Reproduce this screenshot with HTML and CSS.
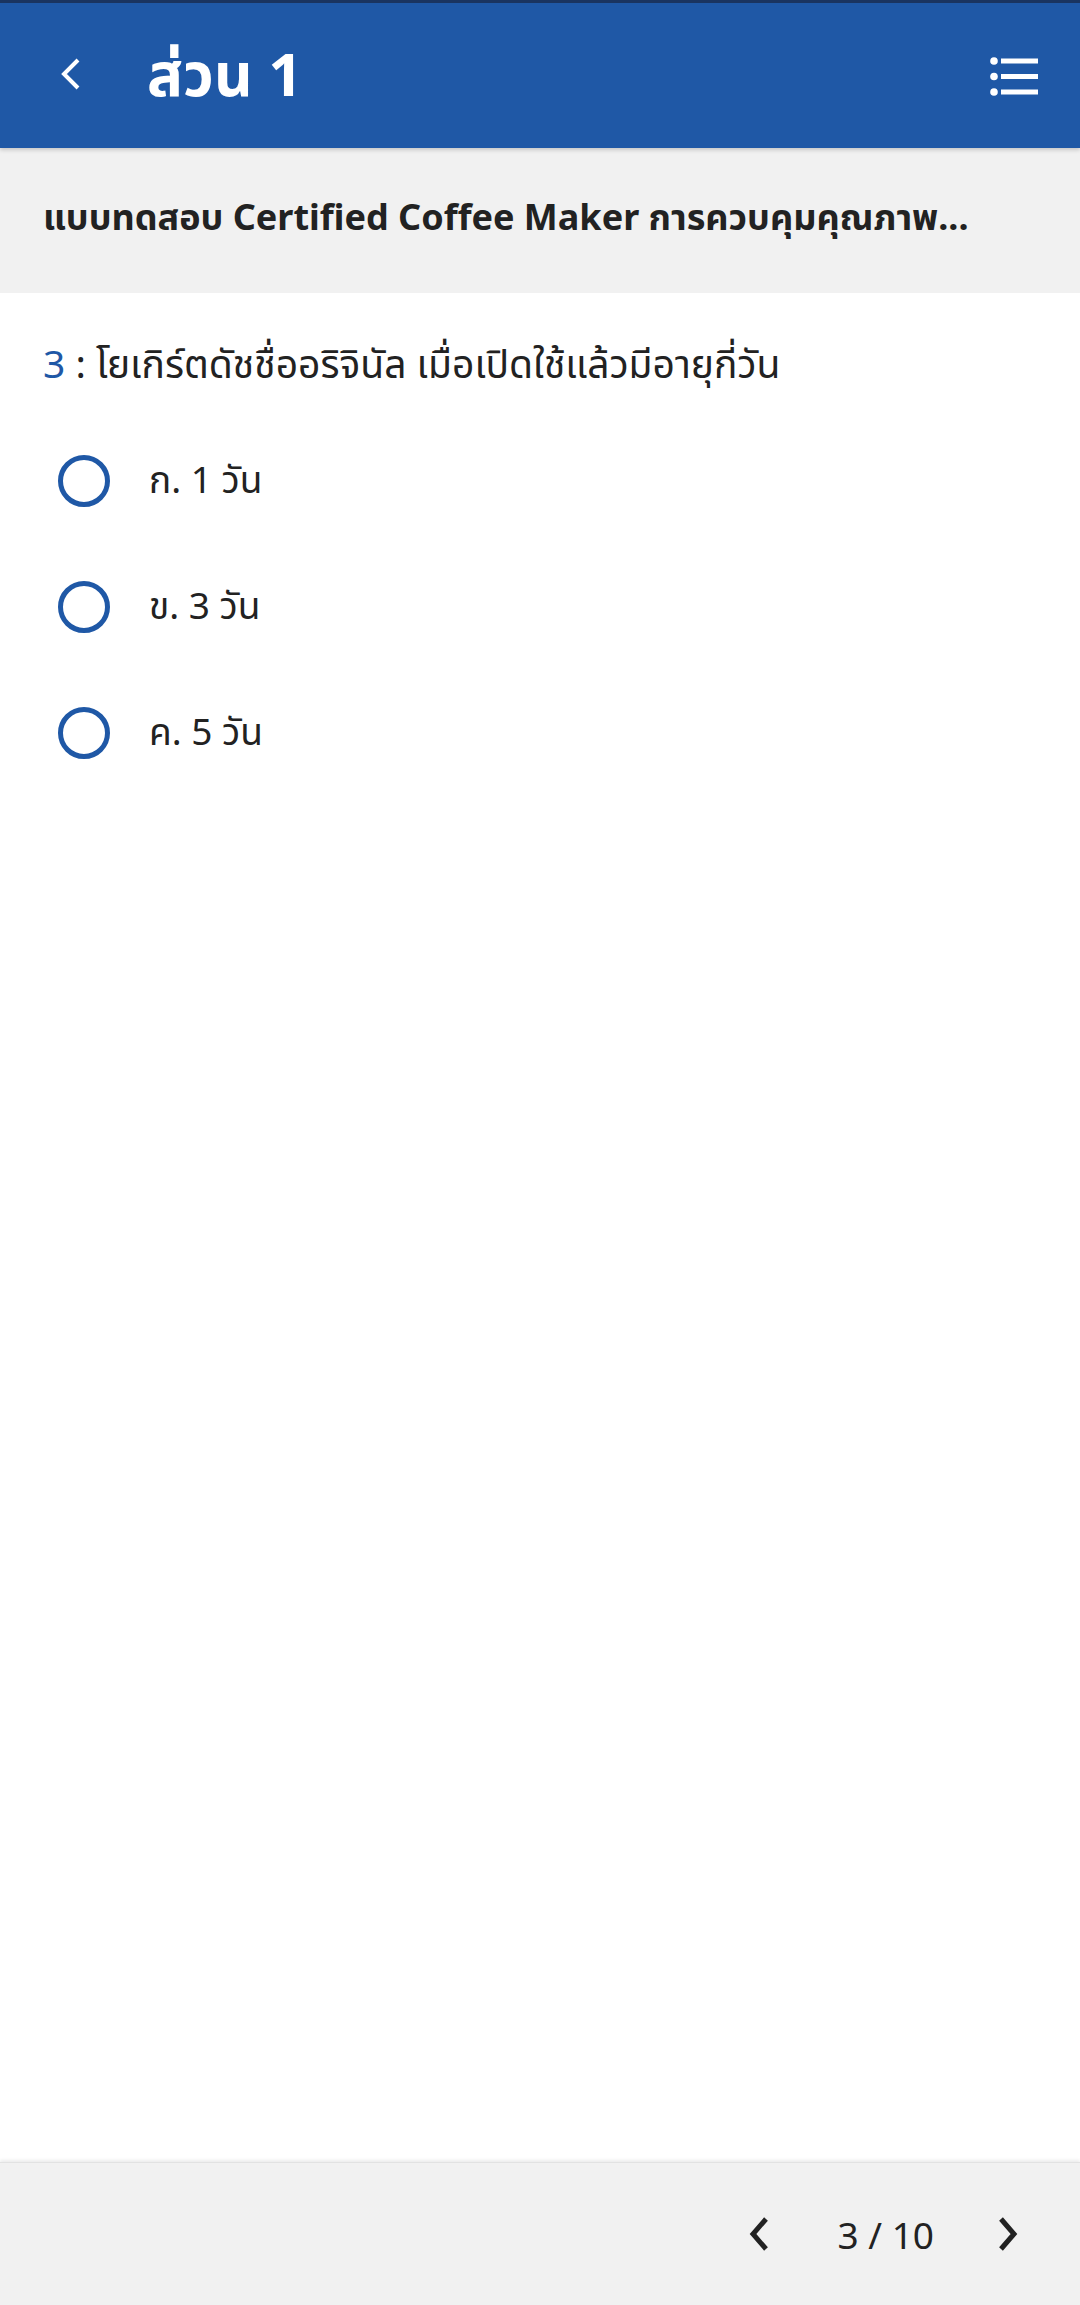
FILE: index.html
```html
<!DOCTYPE html>
<html lang="th">
<head>
<meta charset="utf-8">
<link rel="stylesheet" href="styles.css">
</head>
<body>
<div class="app">
  <header class="topbar">
    <div class="back">
      <svg width="40" height="40" viewBox="0 0 40 40"><path d="M26 6 L12 20 L26 34" fill="none" stroke="#fff" stroke-width="4"/></svg>
    </div>
    <h1 class="title">ส่วน 1</h1>
    <div class="menu">
      <svg width="52" height="40" viewBox="0 0 52 40">
        <circle cx="4" cy="5" r="3.8" fill="#fff"/>
        <circle cx="4" cy="20.5" r="3.8" fill="#fff"/>
        <circle cx="4" cy="36" r="3.8" fill="#fff"/>
        <rect x="11" y="2.5" width="37" height="5" fill="#fff"/>
        <rect x="11" y="18" width="37" height="5" fill="#fff"/>
        <rect x="11" y="33.5" width="37" height="5" fill="#fff"/>
      </svg>
    </div>
  </header>
  <div class="subject">แบบทดสอบ Certified Coffee Maker การควบคุมคุณภาพ...</div>
  <main class="content">
    <p class="question"><span class="qnum">3</span> : โยเกิร์ตดัชชื่ออริจินัล เมื่อเปิดใช้แล้วมีอายุกี่วัน</p>
    <ul class="options">
      <li class="option"><span class="radio"></span><span class="label">ก. 1 วัน</span></li>
      <li class="option"><span class="radio"></span><span class="label">ข. 3 วัน</span></li>
      <li class="option"><span class="radio"></span><span class="label">ค. 5 วัน</span></li>
    </ul>
  </main>
  <footer class="pager">
    <svg class="chev" width="24" height="36" viewBox="0 0 24 36"><path d="M19 3 L6 18 L19 33" fill="none" stroke="#222" stroke-width="5"/></svg>
    <span class="count">3 / 10</span>
    <svg class="chev" width="24" height="36" viewBox="0 0 24 36"><path d="M5 3 L18 18 L5 33" fill="none" stroke="#222" stroke-width="5"/></svg>
  </footer>
</div>
</body>
</html>
```
FILE: styles.css
```css
* { box-sizing: border-box; }
html, body { margin: 0; padding: 0; }
body {
  width: 1080px;
  height: 2305px;
  font-family: "Noto Sans", "Noto Sans Thai", "Loma", "DejaVu Sans", sans-serif;
  color: #222;
  background: #fff;
}
.app {
  display: flex;
  flex-direction: column;
  height: 2305px;
}
.topbar {
  height: 148px;
  background: #1f58a6;
  border-top: 3px solid #1a3460;
  display: flex;
  align-items: center;
  padding: 0 38px 0 52px;
  position: relative;
  z-index: 2;
  box-shadow: 0 2px 4px rgba(0,0,0,0.18);
}
.back { width: 40px; height: 40px; display: flex; margin-top: -4px; }
.title {
  margin: -6px 0 0 55px;
  color: #fff;
  font-size: 60px;
  font-weight: 700;
  flex: 1;
  line-height: 1;
}
.menu { display: flex; margin-top: 0; }
.subject {
  height: 145px;
  background: #f1f1f1;
  display: flex;
  align-items: center;
  padding: 0 43px 4px;
  font-size: 36px;
  font-weight: 700;
  color: #222;
  white-space: nowrap;
  overflow: hidden;
}
.content {
  flex: 1;
  padding: 0 43px;
}
.question {
  margin: 45px 0 0;
  font-size: 39px;
  line-height: 50px;
}
.qnum { color: #1f58a6; }
.options {
  list-style: none;
  margin: 30px 0 0;
  padding: 0;
}
.option {
  display: flex;
  align-items: center;
  height: 126px;
}
.radio {
  width: 52px;
  height: 52px;
  border: 5px solid #1f58a6;
  border-radius: 50%;
  margin-left: 15px;
  flex: none;
}
.option .label {
  margin-left: 39px;
  font-size: 37px;
}
.pager {
  height: 143px;
  background: #f1f1f1;
  box-shadow: 0 -2px 3px rgba(0,0,0,0.08);
  border-top: 1px solid #e2e2e2;
  display: flex;
  align-items: center;
  justify-content: flex-end;
  padding-right: 60px;
}
.count {
  font-size: 37px;
  margin: 0 62px 0 67px;
}
```
